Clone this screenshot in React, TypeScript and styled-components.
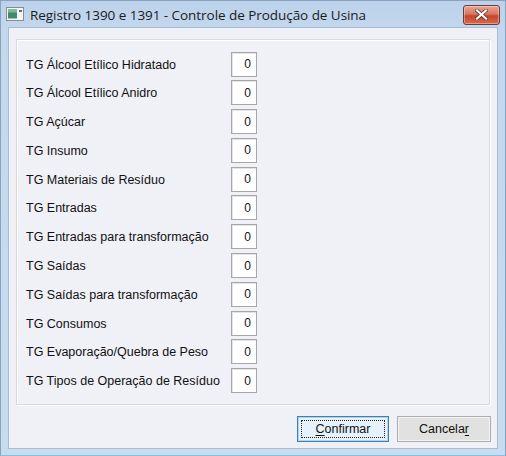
import React from "react";
import styled, { createGlobalStyle } from "styled-components";

const Global = createGlobalStyle`
  html, body { margin: 0; padding: 0; background: #ffffff; }
  * { box-sizing: border-box; }
`;

const Frame = styled.div`
  width: 506px;
  height: 456px;
  display: flex;
  flex-direction: column;
  background: linear-gradient(180deg, #bcd2ea 0%, #c3d8ee 30px, #c8dcef 100%);
  border: 1px solid #8aa2bd;
  border-bottom-color: #7fc3de;
  padding: 0 0 6px 0;
`;

const TitleBar = styled.div`
  height: 30px;
  display: flex;
  align-items: center;
  gap: 6px;
  padding: 0 5px 0 5px;
`;

const Title = styled.div`
  flex: 1;
  font-family: "Open Sans", "Noto Sans", sans-serif;
  font-size: 13.5px;
  color: #1b1b1b;
  letter-spacing: -0.05px;
  padding-top: 1px;
`;

const CloseButton = styled.div`
  width: 37px;
  height: 20px;
  margin-top: 1px;
  border: 1px solid #6b3a3a;
  border-radius: 3px;
  background: linear-gradient(180deg, #e8a596 0%, #d8765f 45%, #c5452c 55%, #d66a4f 100%);
  display: flex;
  align-items: center;
  justify-content: center;
  box-shadow: inset 0 0 0 1px rgba(255, 255, 255, 0.35);
`;

const Client = styled.div`
  flex: 1;
  margin: 0 7px;
  background: #f0f0f7;
  border: 1px solid #a8bdd4;
  padding: 11px 7px 6px 7px;
  display: flex;
  flex-direction: column;
`;

const Panel = styled.div`
  height: 366px;
  border: 1px solid #d9d9e0;
  box-shadow: inset 1px 1px 0 #ffffff, 1px 1px 0 #ffffff;
  padding: 12px 9px 0 9px;
  display: flex;
  flex-direction: column;
  gap: 4.8px;
`;

const Row = styled.div`
  height: 24px;
  display: flex;
  align-items: center;
`;

const Label = styled.div`
  width: 205px;
  font-family: "Liberation Sans", Arial, sans-serif;
  font-size: 12.5px;
  color: #111;
  padding-top: 1px;
`;

const NumBox = styled.div`
  width: 26px;
  height: 25px;
  background: #fff;
  border: 1px solid #a7a7a7;
  box-shadow: inset 1px 1px 0 #e4e4e4;
  font-family: "Liberation Sans", Arial, sans-serif;
  font-size: 12px;
  color: #111;
  display: flex;
  align-items: center;
  justify-content: flex-end;
  padding-right: 5px;
`;

const ButtonBar = styled.div`
  display: flex;
  justify-content: flex-end;
  gap: 8px;
  margin-top: 11px;
  margin-right: -1px;
`;

const Button = styled.div<{ $primary?: boolean }>`
  width: ${(p) => (p.$primary ? 92 : 94)}px;
  height: 26px;
  border: 1px solid ${(p) => (p.$primary ? "#3c7fb1" : "#adadad")};
  background: ${(p) => (p.$primary ? "#e5f1fb" : "#e1e1e1")};
  box-shadow: ${(p) => (p.$primary ? "inset 0 0 0 1px #b6d3ea" : "inset 0 0 0 1px #f2f2f2")};
  display: flex;
  align-items: center;
  justify-content: center;
  position: relative;
  font-family: "Liberation Sans", Arial, sans-serif;
  font-size: 12.5px;
  color: #111;
`;

const FocusRect = styled.div`
  position: absolute;
  inset: 3px;
  border: 1px dotted #222;
`;

const U = styled.span`
  text-decoration: underline;
  text-underline-offset: 2px;
`;

const items = [
  "TG Álcool Etílico Hidratado",
  "TG Álcool Etílico Anidro",
  "TG Açúcar",
  "TG Insumo",
  "TG Materiais de Resíduo",
  "TG Entradas",
  "TG Entradas para transformação",
  "TG Saídas",
  "TG Saídas para transformação",
  "TG Consumos",
  "TG Evaporação/Quebra de Peso",
  "TG Tipos de Operação de Resíduo",
];

const AppIcon = () => (
  <svg width="18" height="14" viewBox="0 0 18 14">
    <rect x="0.5" y="0.5" width="17" height="13" fill="#f4f4f4" stroke="#8c8c8c" />
    <rect x="2" y="2.5" width="9" height="9" fill="#3f8a6a" />
    <rect x="2" y="2.5" width="9" height="3" fill="#7bb89a" />
    <rect x="13" y="3" width="3" height="2" fill="#5b6e84" />
  </svg>
);

const CloseX = () => (
  <svg width="13" height="11" viewBox="0 0 13 11">
    <path d="M2 1.5 L11 9.5 M11 1.5 L2 9.5" stroke="#5a2a22" strokeWidth="3.6" strokeLinecap="square" />
    <path d="M2 1.5 L11 9.5 M11 1.5 L2 9.5" stroke="#ffffff" strokeWidth="2.2" strokeLinecap="square" />
  </svg>
);

export default function App() {
  return (
    <>
      <Global />
      <Frame>
        <TitleBar>
          <AppIcon />
          <Title>Registro 1390 e 1391 - Controle de Produção de Usina</Title>
          <CloseButton>
            <CloseX />
          </CloseButton>
        </TitleBar>
        <Client>
          <Panel>
            {items.map((t) => (
              <Row key={t}>
                <Label>{t}</Label>
                <NumBox>0</NumBox>
              </Row>
            ))}
          </Panel>
          <ButtonBar>
            <Button $primary>
              <FocusRect />
              <span>
                <U>C</U>onfirmar
              </span>
            </Button>
            <Button>
              <span>
                Cancela<U>r</U>
              </span>
            </Button>
          </ButtonBar>
        </Client>
      </Frame>
    </>
  );
}
